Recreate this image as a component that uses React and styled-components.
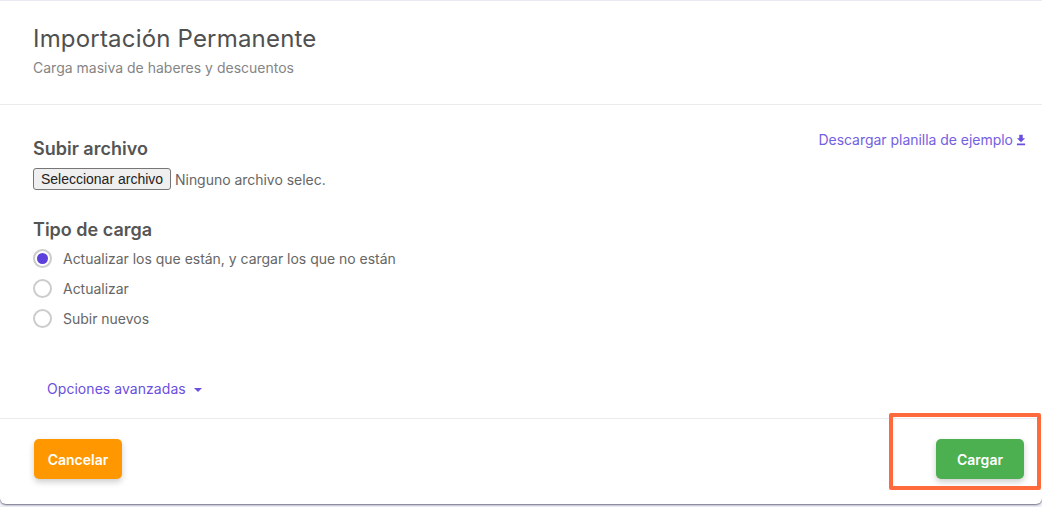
import React, { useState } from 'react';
import styled, { createGlobalStyle } from 'styled-components';

const GlobalStyle = createGlobalStyle`
  html, body {
    margin: 0;
    padding: 0;
    background: #f4f4f9;
    font-family: Inter, "Liberation Sans", sans-serif;
  }
`;

const Page = styled.div`
  position: relative;
  width: 1042px;
  height: 507px;
  overflow: hidden;
  padding-top: 1px;
  box-sizing: border-box;
  background: #f1f1fa;
`;

const Modal = styled.div`
  height: 503px;
  background: #fff;
  border-radius: 0 0 6px 6px;
  box-shadow: 0 1px 2px rgba(50, 50, 70, 0.7);
  display: flex;
  flex-direction: column;
`;

const Header = styled.header`
  height: 104px;
  box-sizing: border-box;
  padding: 22px 33px 0;
  border-bottom: 1px solid #ebebee;
`;

const Title = styled.h1`
  margin: 0;
  font-size: 24px;
  line-height: 30px;
  font-weight: 400;
  letter-spacing: 0.19px;
  color: #505050;
  position: relative;
  top: 1px;
`;

const Subtitle = styled.p`
  margin: 5px 0 0;
  font-size: 14px;
  line-height: 20px;
  color: #858585;
`;

const Body = styled.div`
  position: relative;
  flex: 1;
  padding: 34px 33px 0;
`;

const SampleLink = styled.a`
  float: right;
  margin: -9px -19px 0 0;
  display: flex;
  align-items: center;
  gap: 1px;
  font-size: 14px;
  letter-spacing: -0.03px;
  line-height: 20px;
  color: #7460e0;
  cursor: pointer;
`;

const SectionTitle = styled.h2`
  margin: 0;
  font-size: 18px;
  line-height: 20px;
  font-weight: 600;
  color: #555555;
`;

const FileRow = styled.div`
  display: flex;
  align-items: center;
  gap: 4px;
  margin: 9px 0 30px;
  height: 22px;
  font-size: 14px;
  letter-spacing: -0.03px;
  color: #666666;
`;

const FileButton = styled.button`
  box-sizing: border-box;
  width: 138px;
  height: 22px;
  padding: 0;
  background: #efefef;
  border: 1px solid #767676;
  border-radius: 3px;
  font-family: "Liberation Sans", Arial, sans-serif;
  font-size: 14px;
  color: #222;
`;

const RadioList = styled.div`
  display: flex;
  flex-direction: column;
  gap: 10px;
  margin-top: 8px;
`;

const RadioRow = styled.label`
  display: flex;
  align-items: center;
  gap: 11px;
  height: 20px;
  font-size: 14px;
  letter-spacing: -0.02px;
  color: #666666;
  cursor: pointer;
`;

const RadioDot = styled.span`
  box-sizing: border-box;
  width: 19px;
  height: 19px;
  border-radius: 50%;
  border: 2px solid #cccccc;
  display: flex;
  align-items: center;
  justify-content: center;

  &::after {
    content: '';
    width: 11px;
    height: 11px;
    border-radius: 50%;
    background: ${(props) => (props.$checked ? '#5d3fdc' : 'transparent')};
  }
`;

const Advanced = styled.div`
  position: absolute;
  left: 47px;
  top: 274px;
  display: flex;
  align-items: center;
  gap: 8px;
  font-size: 14px;
  letter-spacing: 0.05px;
  line-height: 20px;
  color: #6a4fe0;
  cursor: pointer;

  &::after {
    content: '';
    border-left: 4px solid transparent;
    border-right: 4px solid transparent;
    border-top: 4px solid #6a4fe0;
    margin-top: 1px;
  }
`;

const Footer = styled.footer`
  height: 86px;
  box-sizing: border-box;
  border-top: 1px solid #ebebee;
  padding: 20px 18px 0 34px;
  display: flex;
  justify-content: space-between;
  align-items: flex-start;
`;

const ActionButton = styled.button`
  width: 88px;
  height: 40px;
  border: 0;
  border-radius: 5px;
  background: ${(props) => props.$color};
  color: #fff;
  font-family: Inter, "Liberation Sans", sans-serif;
  font-size: 14px;
  font-weight: 600;
  box-shadow: 0 3px 6px rgba(0, 0, 0, 0.2);
  cursor: pointer;
`;

const Highlight = styled.div`
  position: absolute;
  left: 889px;
  top: 413px;
  width: 152px;
  height: 77px;
  box-sizing: border-box;
  border: 4px solid #ff6a3d;
  border-radius: 2px;
  pointer-events: none;
`;

const OPTIONS = ['Actualizar los que están, y cargar los que no están', 'Actualizar', 'Subir nuevos'];

export default function App() {
  const [selected, setSelected] = useState(0);

  return (
    <Page>
      <GlobalStyle />
      <Modal>
        <Header>
          <Title>Importación Permanente</Title>
          <Subtitle>Carga masiva de haberes y descuentos</Subtitle>
        </Header>
        <Body>
          <SampleLink>
            Descargar planilla de ejemplo
            <svg width="14" height="14" viewBox="0 0 24 24" fill="#6a4fe0">
              <path d="M19 9h-4V3H9v6H5l7 7 7-7zM5 18v3h14v-3H5z" />
            </svg>
          </SampleLink>
          <SectionTitle>Subir archivo</SectionTitle>
          <FileRow>
            <FileButton type="button">Seleccionar archivo</FileButton>
            Ninguno archivo selec.
          </FileRow>
          <SectionTitle>Tipo de carga</SectionTitle>
          <RadioList>
            {OPTIONS.map((label, i) => (
              <RadioRow key={label} onClick={() => setSelected(i)}>
                <RadioDot $checked={selected === i} />
                {label}
              </RadioRow>
            ))}
          </RadioList>
          <Advanced>Opciones avanzadas</Advanced>
        </Body>
        <Footer>
          <ActionButton type="button" $color="#ff9800">Cancelar</ActionButton>
          <ActionButton type="button" $color="#4caf50">Cargar</ActionButton>
        </Footer>
      </Modal>
      <Highlight />
    </Page>
  );
}
